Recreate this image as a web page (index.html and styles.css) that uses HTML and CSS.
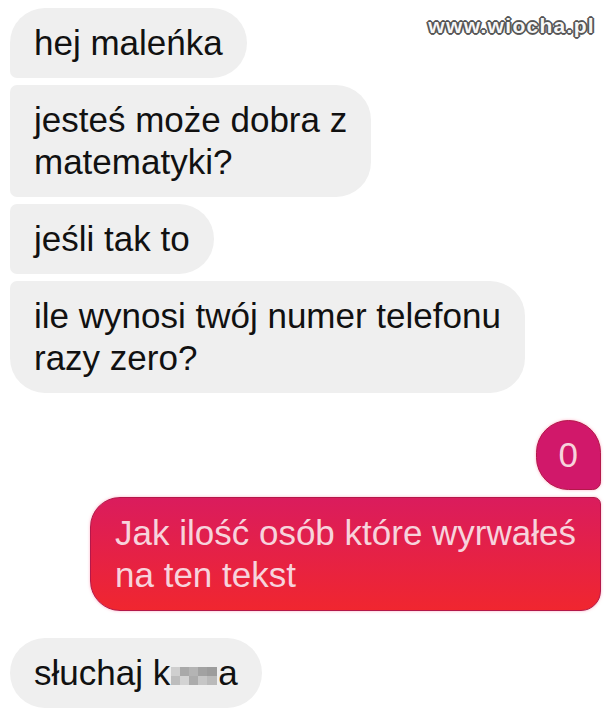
FILE: index.html
```html
<!DOCTYPE html>
<html lang="pl">
<head>
  <meta charset="UTF-8" />
  <meta name="viewport" content="width=device-width, initial-scale=1.0"/>
  <title>wiadomości</title>
  <link rel="stylesheet" href="styles.css">
</head>
<body>
  <div class="watermark">www.wiocha.pl</div>

  <div class="chat">
    <div class="msg in first">hej maleńka</div>
    <div class="msg in mid">jesteś może dobra z<br>matematyki?</div>
    <div class="msg in mid">jeśli tak to</div>
    <div class="msg in last">ile wynosi twój numer telefonu<br>razy zero?</div>

    <div class="msg out first new-group">0</div>
    <div class="msg out last">Jak ilość osób które wyrwałeś<br>na ten tekst</div>

    <div class="msg in single new-group">słuchaj k<svg class="censor" width="46" height="18" viewBox="0 0 46 18">
        <rect x="0" y="0" width="10" height="9" fill="#cfcfcf"/>
        <rect x="9" y="0" width="10" height="9" fill="#a9a9a9"/>
        <rect x="18" y="0" width="10" height="9" fill="#b4b4b4"/>
        <rect x="27" y="0" width="10" height="9" fill="#a2a2a2"/>
        <rect x="36" y="0" width="10" height="9" fill="#9c9c9c"/>
        <rect x="0" y="9" width="10" height="9" fill="#bdbdbd"/>
        <rect x="9" y="9" width="10" height="9" fill="#d3d3d3"/>
        <rect x="18" y="9" width="10" height="9" fill="#acacac"/>
        <rect x="27" y="9" width="10" height="9" fill="#c6c6c6"/>
        <rect x="36" y="9" width="10" height="9" fill="#bababa"/>
      </svg>a</div>
  </div>
</body>
</html>
```

FILE: styles.css
```css
body {
  margin: 0;
  background: #fff;
  font-family: "Liberation Sans", Arial, sans-serif;
  color: #111;
  position: relative;
}
.watermark {
  position: absolute;
  top: 14px;
  right: 14px;
  font-size: 21px;
  font-weight: bold;
  letter-spacing: 1.3px;
  color: #f7f7f7;
  text-shadow:
    1px 0 #555, -1px 0 #555, 0 1px #555, 0 -1px #555,
    1px 1px #555, -1px -1px #555, 1px -1px #555, -1px 1px #555,
    2px 0 #666, -2px 0 #666, 0 2px #666, 0 -2px #666;
}
.chat {
  display: flex;
  flex-direction: column;
  gap: 7px;
  padding: 8px 8px 8px 10px;
}
.msg {
  width: fit-content;
  font-size: 35px;
  line-height: 42px;
  padding: 14px 24px;
  border-radius: 35px;
  white-space: nowrap;
}
.msg.in {
  align-self: flex-start;
  background: #efefef;
}
.msg.in.first { border-bottom-left-radius: 7px; }
.msg.in.mid { border-radius: 7px 35px 35px 7px; }
.msg.in.last { border-top-left-radius: 7px; }

.msg.out {
  align-self: flex-end;
  color: #f7d3dc;
  border: 1px solid #b3184a;
  box-shadow: 0 0 3px rgba(255, 140, 170, 0.7);
}
.msg.out.first {
  background: #d1186a;
  padding: 13px 22px;
  border-bottom-right-radius: 9px;
}
.msg.out.last {
  background: linear-gradient(#da1c5d, #f0262f);
  padding: 14px 24px;
  border-radius: 30px 7px 20px 30px;
}
.new-group {
  margin-top: 20px;
}
.censor {
  vertical-align: baseline;
  margin: 0 1px;
}
```
